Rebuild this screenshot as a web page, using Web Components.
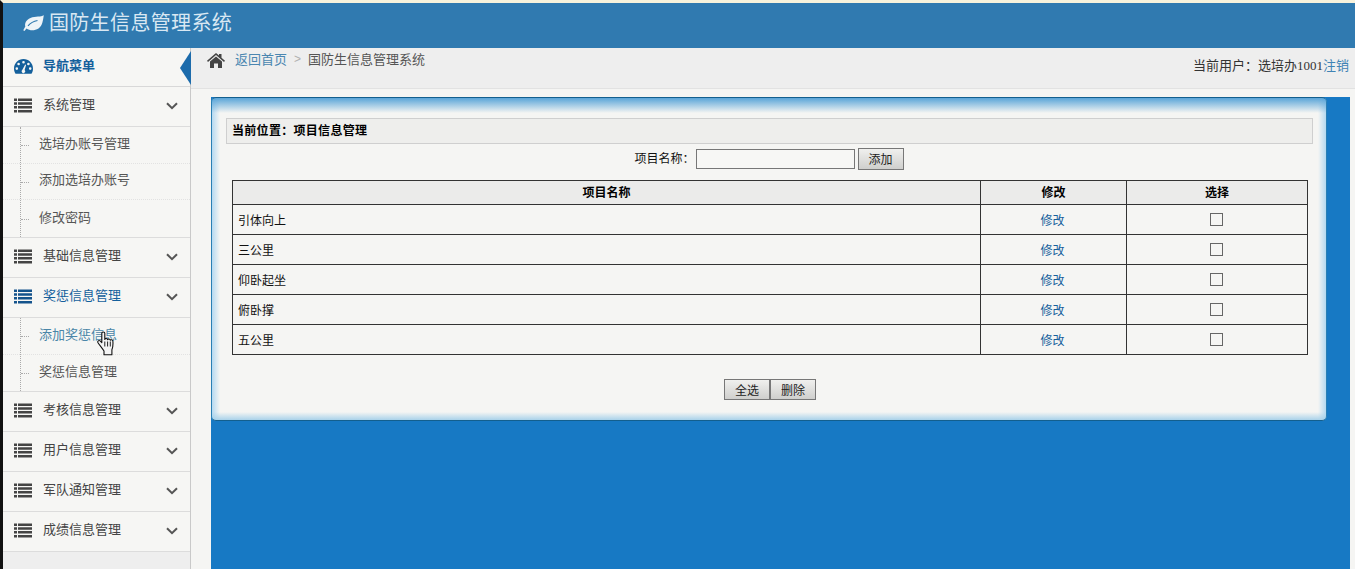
<!DOCTYPE html>
<html lang="zh-CN">
  <head>
    <meta charset="UTF-8" />
    <title>国防生信息管理系统</title>
    <style>
      html, body { margin: 0; height: 100%; overflow: hidden; }
      body {
        background: #f5f5f3;
        font-family: "Liberation Sans", "Noto Sans CJK SC", sans-serif;
        font-size: 13px;
        color: #333;
      }
      #page { display: grid; grid-template-columns: 191px 1fr; grid-template-rows: 48px 521px; height: 569px; }
      app-header { grid-column: 1 / 3; }
      #cursor { position: absolute; left: 97px; top: 331px; }
    </style>
  </head>
  <body>
    <div id="page">
      <app-header>国防生信息管理系统</app-header>
      <side-menu>
        <menu-group label="系统管理" open>
          <menu-link>选培办账号管理</menu-link>
          <menu-link>添加选培办账号</menu-link>
          <menu-link>修改密码</menu-link>
        </menu-group>
        <menu-group label="基础信息管理"></menu-group>
        <menu-group label="奖惩信息管理" open active>
          <menu-link active>添加奖惩信息</menu-link>
          <menu-link>奖惩信息管理</menu-link>
        </menu-group>
        <menu-group label="考核信息管理"></menu-group>
        <menu-group label="用户信息管理"></menu-group>
        <menu-group label="军队通知管理"></menu-group>
        <menu-group label="成绩信息管理"></menu-group>
      </side-menu>
      <main-area>
        <project-panel></project-panel>
      </main-area>
    </div>
    <svg id="cursor" width="18" height="25" viewBox="0 0 18 25">
      <path d="M4.800 2.300c0-1.800 3-1.800 3 0v6.200c.2-1.300 2.500-1.300 2.800.2.400-1 2.400-.9 2.700.5.500-.8 2.500-.5 2.600 1 .2 3.100.1 6.300-1 8.600v4.900H7v-3.700C5.200 17 3 14.600 1 11.700c-.9-1.500.8-2.800 2.100-1.800l1.700 1.700z" fill="#f4f4f4" stroke="#111" stroke-width="1.100" stroke-linejoin="round"/>
      <path d="M7.800 10.500v5M10.600 10.500v5M13.300 10.500v5" stroke="#222" stroke-width="1"/>
    </svg>

    <script>
      const listIcon = `<svg width="18" height="15" viewBox="0 0 18 15" fill="currentColor">
        <path d="M0 .5h3V3H0zM4 .5h14V3H4zM0 4.300h3v2.500H0zM4 4.300h14v2.500H4zM0 8.100h3v2.500H0zM4 8.100h14v2.500H4zM0 11.900h3v2.500H0zM4 11.900h14v2.500H4z"/>
      </svg>`;
      const chevron = `<svg width="12" height="8" viewBox="0 0 12 8" fill="none" stroke="#555" stroke-width="2"><path d="M1 1.200l5 5 5-5"/></svg>`;

      class AppHeader extends HTMLElement {
        constructor() {
          super();
          this.attachShadow({ mode: "open" }).innerHTML = `
            <style>
              :host { display: flex; align-items: center; box-sizing: border-box; height: 48px; border-top: 3px solid #f7f2dc; border-left: 3px solid #111; background: #307ab0; padding: 0 0 8px 20px; color: #d9e8f3; font-size: 20px; }
              svg { margin-right: 5px; position: relative; top: 2px; }
              span { letter-spacing: .35px; }
            </style>
            <svg width="21" height="17" viewBox="0 0 21 17">
              <path fill="#eef4f8" d="M20.800.3C18 2.200 12.500 1 7.500 3 3 4.800 1.500 8.500 2.300 11.500L.5 14.700c-.4 1 .8 1.700 1.400.8L3.500 13.500c3 2.200 8 2.500 12 0C19.500 11 20 5 20.800.3z"/>
              <path fill="none" stroke="#307ab0" stroke-width="1.200" d="M5 10.800C7.500 8 10.500 6.300 14.500 5.500"/>
            </svg>
            <span><slot></slot></span>`;
        }
      }
      customElements.define("app-header", AppHeader);

      class SideMenu extends HTMLElement {
        constructor() {
          super();
          this.attachShadow({ mode: "open" }).innerHTML = `
            <style>
              :host { display: block; position: relative; box-sizing: border-box; border-left: 3px solid #111; border-right: 1px solid #c9c9c9; background: #eeeeee; height: 521px; }
              .title { display: flex; align-items: center; box-sizing: border-box; height: 39px; background: #f6f6f4; border-bottom: 1px solid #d8d8d8; padding-left: 11px; color: #14609c; font-weight: bold; }
              .title svg { margin-right: 10px; position: relative; top: -1px; }
              .title span { position: relative; top: -3px; }
              .notch { position: absolute; right: -1px; top: 3px; width: 0; height: 0; border-style: solid; border-width: 17px 11px 17px 0; border-color: transparent #1c6bab transparent transparent; }
            </style>
            <div class="title">
              <svg width="19" height="15" viewBox="0 0 19 15"><path fill="#14609c" fill-rule="evenodd" d="M9.500 0C4.300 0 0 4.200 0 9.500c0 1.900.5 3.700 1.500 5.200h16c1-1.500 1.500-3.300 1.500-5.200C19 4.200 14.700 0 9.500 0zM9.500 2a1.300 1.300 0 110 2.600 1.300 1.300 0 010-2.600zM4.600 3.700a1.300 1.300 0 110 2.600 1.300 1.300 0 010-2.600zM14.400 3.700a1.300 1.300 0 110 2.600 1.300 1.300 0 010-2.600zM2.800 8.300a1.300 1.300 0 110 2.600 1.300 1.300 0 010-2.600zM16.200 8.300a1.300 1.300 0 110 2.600 1.300 1.300 0 010-2.600zM11.200 5.500l.9.400-1.500 5a1.800 1.800 0 11-2.200-.1z"/></svg>
              <span>导航菜单</span>
            </div>
            <div class="notch"></div>
            <slot></slot>`;
        }
      }
      customElements.define("side-menu", SideMenu);

      class MenuGroup extends HTMLElement {
        constructor() {
          super();
          const active = this.hasAttribute("active");
          const open = this.hasAttribute("open");
          this.attachShadow({ mode: "open" }).innerHTML = `
            <style>
              :host { display: block; background: #f6f6f4; }
              .head { display: flex; align-items: center; box-sizing: border-box; height: 40px; padding: 0 12px 0 11px; border-bottom: 1px solid #dcdcdc; color: ${active ? "#14609c" : "#444"}; }
              .ico { display: flex; color: ${active ? "#14538c" : "#444"}; margin-right: 11px; position: relative; top: -1px; }
              .label { flex: 1; position: relative; top: -3px; }
              .arrow { display: flex; position: relative; top: -1px; }
              .subs { position: relative; display: ${open ? "block" : "none"}; border-bottom: 1px solid #dcdcdc; }
              .subs::before { content: ""; position: absolute; left: 17px; top: 0; bottom: 0; border-left: 1px dotted #aaa; }
            </style>
            <div class="head">
              <span class="ico">${listIcon}</span>
              <span class="label">${this.getAttribute("label")}</span>
              <span class="arrow">${chevron}</span>
            </div>
            <div class="subs"><slot></slot></div>`;
        }
      }
      customElements.define("menu-group", MenuGroup);

      class MenuLink extends HTMLElement {
        constructor() {
          super();
          const active = this.hasAttribute("active");
          this.attachShadow({ mode: "open" }).innerHTML = `
            <style>
              :host { display: flex; align-items: center; box-sizing: border-box; height: 36.700px; border-bottom: 1px dotted #e2e2e2; padding-left: 36px; color: ${active ? "#4a86a8" : "#555"}; position: relative; }
              :host(:last-child) { border-bottom: 0; }
              :host::before { content: ""; position: absolute; left: 18px; top: 50%; width: 8px; border-top: 1px dotted #aaa; }
              span { position: relative; top: -2px; }
              :host(:nth-child(2)) span { top: -3px; }
            </style>
            <span><slot></slot></span>`;
        }
      }
      customElements.define("menu-link", MenuLink);

      class MainArea extends HTMLElement {
        constructor() {
          super();
          this.attachShadow({ mode: "open" }).innerHTML = `
            <style>
              :host { display: flex; flex-direction: column; height: 521px; background: #f5f5f3; }
              .crumbs { display: flex; align-items: flex-start; box-sizing: border-box; height: 41px; background: #eeeeee; border-bottom: 1px solid #e2e2e2; padding: 3px 6px 0 16px; color: #555; }
              .crumbs svg { margin-right: 10px; margin-top: 2px; }
              .crumbs a { color: #4a86b0; }
              .sep { color: #b0b0b0; margin: 0 7px; font-size: 12px; }
              .crumbs .path { flex: 1; display: flex; line-height: 17px; }
              .user { color: #333; margin-top: 6px; line-height: 17px; }
              .user b { font-weight: normal; font-family: "Liberation Serif", serif; }
              .user a { color: #3f83b4; }
              .stage { flex: 1; display: flex; margin: 8px 5px 0 20px; background: #1779c4; align-items: flex-start; }
            </style>
            <div class="crumbs">
              <svg width="18" height="15" viewBox="0 0 18 15"><path fill="#444" d="M9 0l3 2.600V1h2.500v3.700L18 7.800l-1 1.100L9 2.100 1 8.900 0 7.800zM9 3.500l6 5V15h-4v-4.500H7V15H3V8.500z"/></svg>
              <span class="path"><a>返回首页</a><span class="sep">&gt;</span><span>国防生信息管理系统</span></span>
              <span class="user">当前用户：选培办<b>1001</b><a>注销</a></span>
            </div>
            <div class="stage"><slot></slot></div>`;
        }
      }
      customElements.define("main-area", MainArea);

      class ProjectPanel extends HTMLElement {
        constructor() {
          super();
          const rows = ["引体向上", "三公里", "仰卧起坐", "俯卧撑", "五公里"]
            .map((n) => `<tr><td>${n}</td><td class="c"><a>修改</a></td><td class="c"><i></i></td></tr>`)
            .join("");
          this.attachShadow({ mode: "open" }).innerHTML = `
            <style>
              :host { display: block; box-sizing: border-box; width: 1116px; height: 324px; padding: 20px 13px 0 15px; border-radius: 5px; border: 1px solid #2a7fb4; border-top-color: #135f8e; border-bottom-color: #135f8e; color: #111; font-size: 12px;
                background:
                  linear-gradient(#5aa5d8, rgba(245,245,243,0) 15px),
                  linear-gradient(rgba(245,245,243,0) calc(100% - 8px), #a9d2ea),
                  linear-gradient(90deg, #b5d9f1, rgba(245,245,243,0) 8px),
                  linear-gradient(270deg, #b5d9f1, rgba(245,245,243,0) 8px),
                  #f5f5f3; }
              .pos { box-sizing: border-box; height: 26px; line-height: 24px; padding-left: 5px; background: #eeeeec; border: 1px solid #cfcfcf; font-weight: bold; color: #000; letter-spacing: .3px; margin-left: -1px; }
              .search { display: flex; justify-content: center; align-items: flex-start; height: 36px; padding: 4px 2px 0 0; box-sizing: border-box; }
              .search label { line-height: 20px; width: 55px; margin-right: 6px; white-space: nowrap; position: relative; top: 1px; }
              .search input { box-sizing: border-box; width: 159px; height: 20px; margin: 1px 3px 0 0; padding: 0; border: 1px solid #777; background: #f7f7f5; }
              .btn { box-sizing: border-box; display: flex; align-items: center; justify-content: center; width: 46px; height: 22px; padding-bottom: 1px; border: 1px solid #777; background: linear-gradient(#f0f0ee, #cfcfcd); color: #222; }
              .tb { margin: 0 5px 0 5px; }
              table { width: 100%; table-layout: fixed; border-collapse: collapse; }
              th, td { border: 1px solid #333; padding: 0; }
              th { height: 23px; background: #ebebea; font-weight: bold; color: #000; }
              th span { position: relative; top: -1px; }
              td { height: 29px; padding-left: 5px; color: #111; }
              td.c { padding-left: 0; text-align: center; }
              td a { color: #14609c; position: relative; left: -1px; }
              i { display: block; width: 13px; height: 13px; margin: 0 auto; box-sizing: border-box; border: 1px solid #666; position: relative; left: -1px; }
              .actions { display: flex; justify-content: center; padding-top: 24px; }
              .actions .btn { height: 21px; }
            </style>
            <div class="pos">当前位置：项目信息管理</div>
            <div class="search">
              <label>项目名称：</label><input type="text" /><span class="btn">添加</span>
            </div>
            <div class="tb">
              <table>
                <colgroup><col style="width:748px" /><col style="width:146px" /><col /></colgroup>
                <tr><th><span>项目名称</span></th><th><span>修改</span></th><th><span>选择</span></th></tr>
                ${rows}
              </table>
            </div>
            <div class="actions"><span class="btn">全选</span><span class="btn">删除</span></div>`;
        }
      }
      customElements.define("project-panel", ProjectPanel);
    </script>
  </body>
</html>
